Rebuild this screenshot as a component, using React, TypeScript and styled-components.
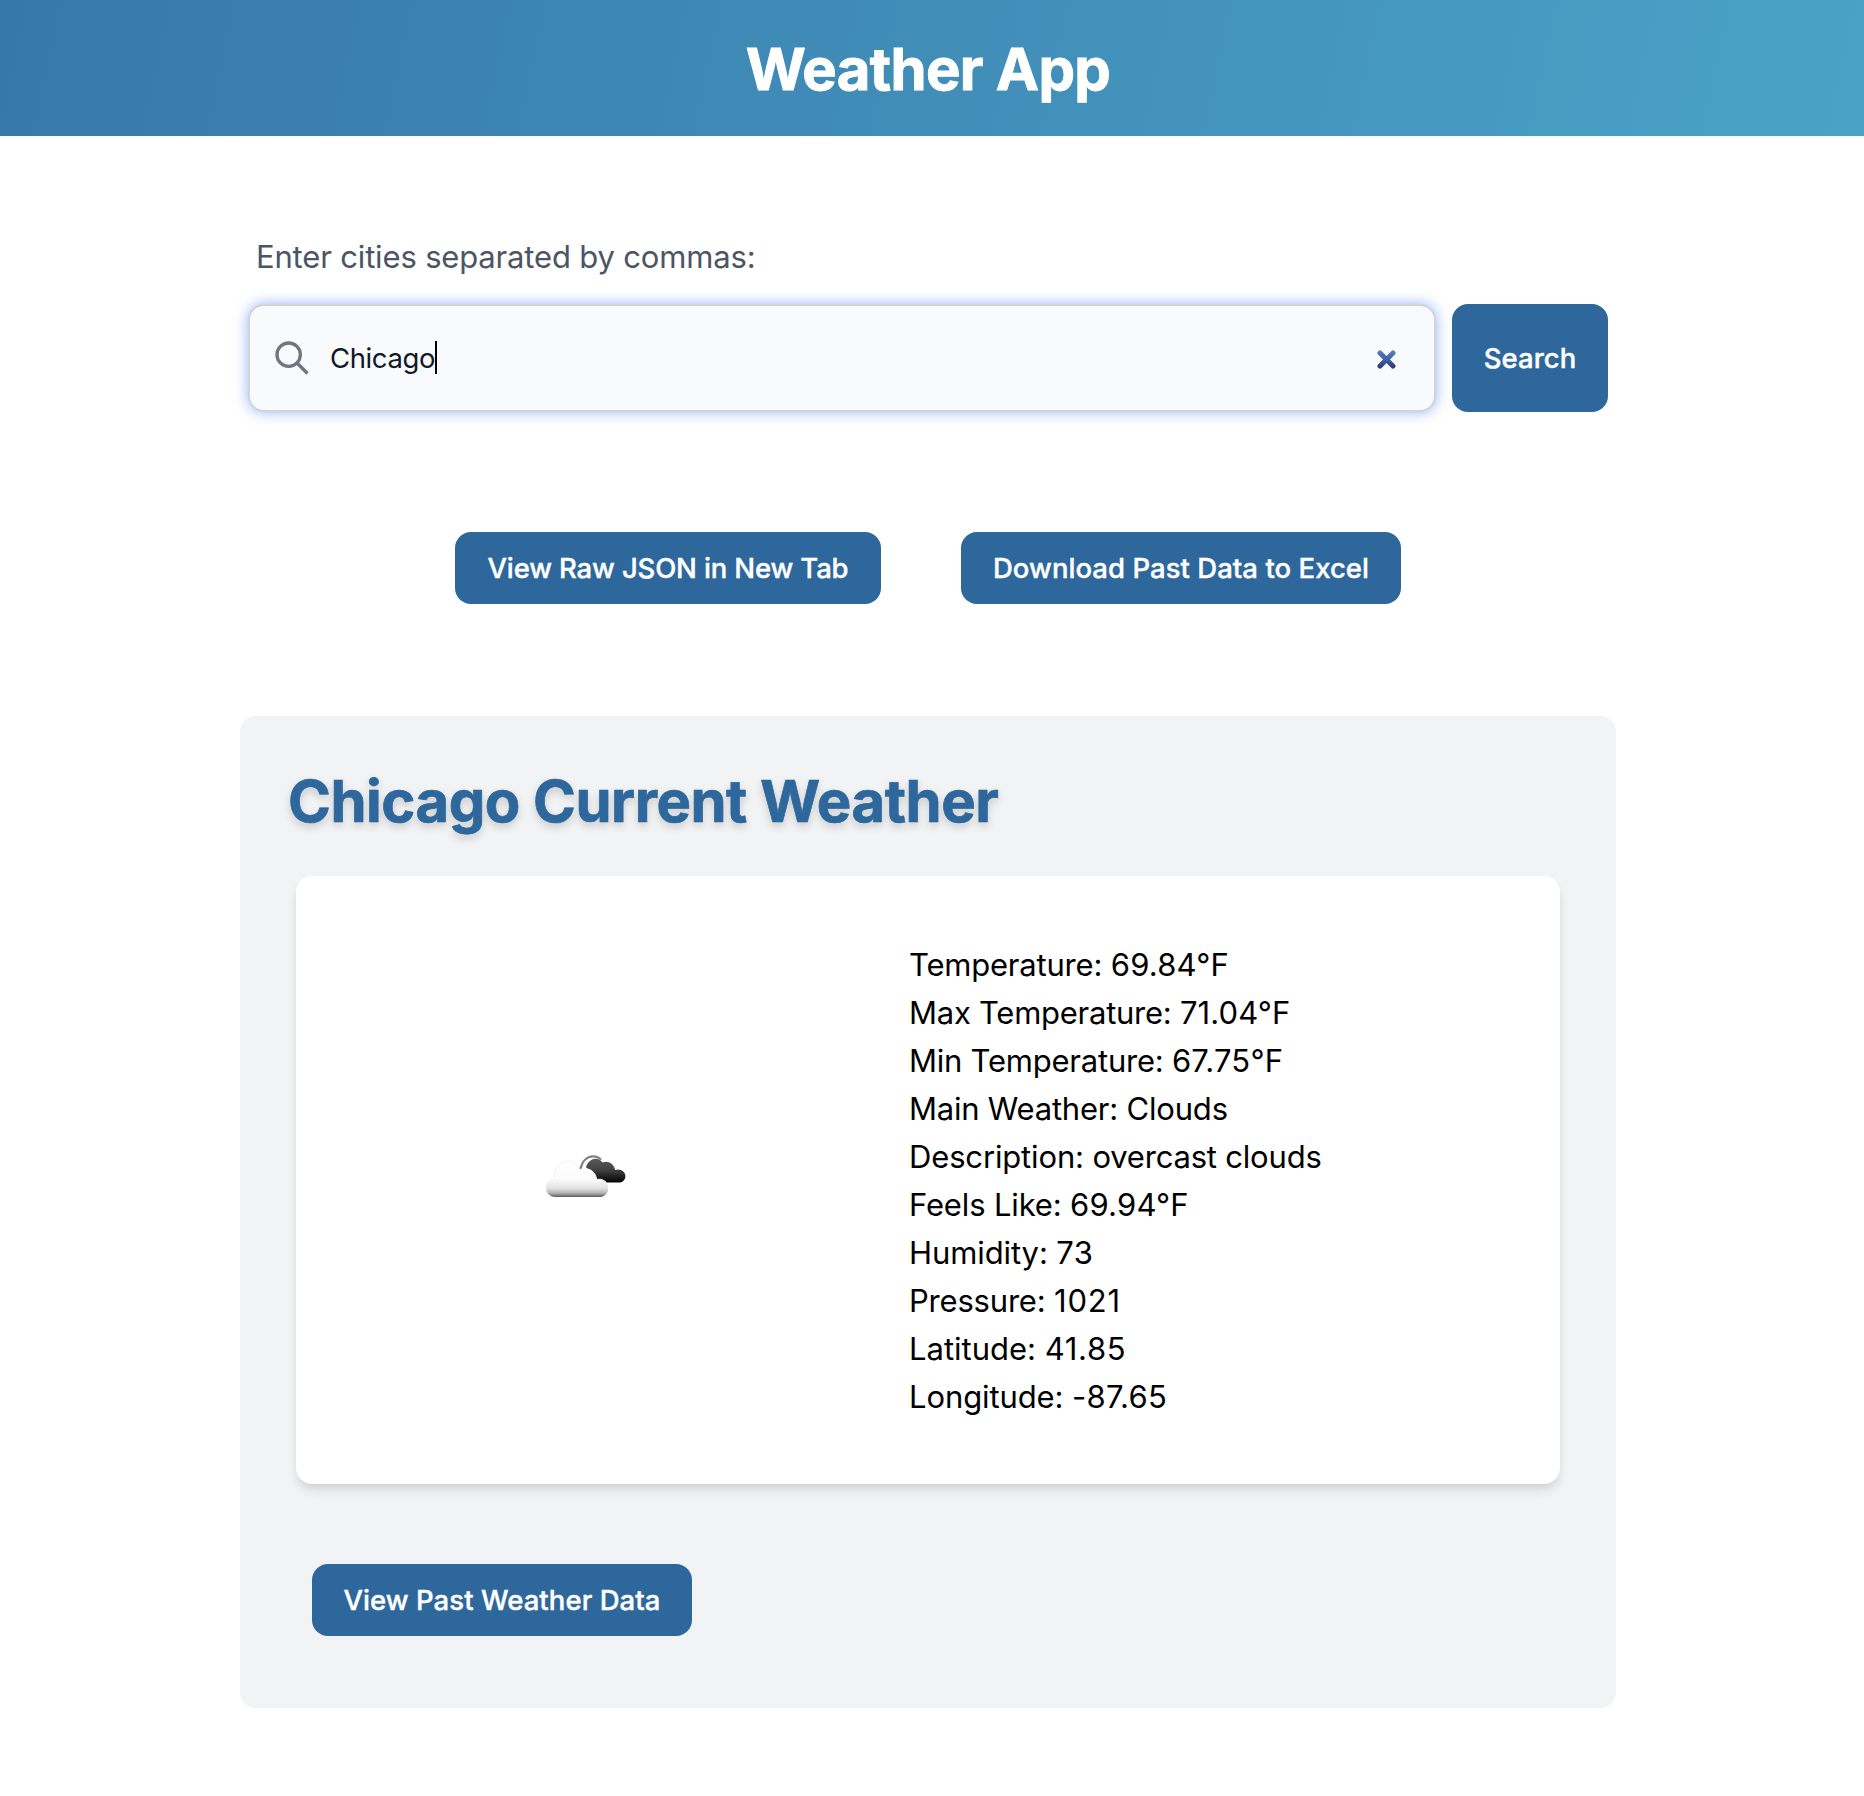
import React from 'react';
import styled, { createGlobalStyle } from 'styled-components';

const BLUE = '#2d679b';

const GlobalStyle = createGlobalStyle`
  *, *::before, *::after { box-sizing: border-box; }
  html, body { margin: 0; padding: 0; background: #ffffff; }
  body {
    font-family: Inter, "Liberation Sans", sans-serif;
    color: #000000;
    -webkit-font-smoothing: antialiased;
  }
  h1, h2, p, ul { margin: 0; padding: 0; }
`;

const Page = styled.div`
  min-height: 1796px;
  display: flex;
  flex-direction: column;
`;

const Header = styled.header`
  height: 136px;
  padding: 33px 8px 31px 0;
  background: linear-gradient(102deg, #3778aa 0%, #4aa3c7 100%);
  text-align: center;
`;

const Title = styled.h1`
  font-size: 58px;
  line-height: 72px;
  font-weight: 700;
  letter-spacing: -0.674px;
  color: #ffffff;
  -webkit-text-stroke: 0.9px #ffffff;
`;

const Main = styled.main`
  display: flex;
  flex-direction: column;
  align-items: center;
  padding: 97px 8px 88px 0;
`;

const SearchForm = styled.form`
  width: 1360px;
  display: flex;
  flex-direction: column;
  gap: 23px;
`;

const Label = styled.label`
  padding-left: 8px;
  font-size: 31px;
  line-height: 48px;
  letter-spacing: -0.165px;
  color: #4d5564;
`;

const SearchRow = styled.div`
  display: flex;
  gap: 16px;
  height: 108px;
`;

const Field = styled.div`
  flex: 1;
  display: flex;
  align-items: center;
  padding: 0 38px 0 22px;
  border: 2px solid #d2d4d8;
  border-radius: 16px;
  background: #f9fafc;
  box-shadow: 0 0 14px rgba(80, 130, 245, 0.6);
`;

const FieldText = styled.span`
  margin-left: 18px;
  font-size: 27.5px;
  line-height: 40px;
  letter-spacing: -0.4px;
  color: #111827;
`;

const Caret = styled.span`
  width: 2px;
  height: 33px;
  margin: 0 auto 1px 0;
  background: #000000;
`;

const ClearButton = styled.span`
  display: flex;
  margin-top: 3px;
`;

const Button = styled.button<{ $width: number; $tracking: number }>`
  width: ${(p) => p.$width}px;
  padding: 16px 0;
  border: 0;
  border-radius: 16px;
  background: ${BLUE};
  color: #ffffff;
  font-family: inherit;
  font-size: 27.5px;
  font-weight: 500;
  line-height: 40px;
  letter-spacing: ${(p) => p.$tracking}px;
  text-align: center;
  white-space: nowrap;
  -webkit-text-stroke: 0.4px #ffffff;
`;

const Actions = styled.div`
  display: flex;
  justify-content: center;
  gap: 80px;
  margin: 120px 0 112px;
`;

const Panel = styled.section`
  width: 1376px;
  height: 992px;
  padding: 49px 48px 72px;
  border-radius: 16px;
  background: #f2f3f5;
`;

const Heading = styled.h2`
  font-size: 58px;
  line-height: 72px;
  font-weight: 700;
  letter-spacing: -0.494px;
  color: ${BLUE};
  -webkit-text-stroke: 0.7px ${BLUE};
  text-shadow: 0 4px 8px rgba(0, 0, 0, 0.18);
`;

const Card = styled.article`
  display: grid;
  grid-template-columns: 452px 1fr;
  column-gap: 97px;
  margin: 39px 8px 80px;
  height: 608px;
  padding: 65px 64px 63px;
  border-radius: 16px;
  background: #ffffff;
  box-shadow: 0 8px 12px -2px rgba(0, 0, 0, 0.1), 0 4px 8px -2px rgba(0, 0, 0, 0.06);
`;

const IconCell = styled.div`
  display: flex;
  align-items: center;
  justify-content: center;
`;

const CloudArt = styled.svg`
  display: block;
  margin-top: -2px;
  filter: blur(0.7px);
`;

const Details = styled.ul`
  list-style: none;
`;

const Detail = styled.li`
  font-size: 31px;
  line-height: 48px;
  white-space: pre;
`;

const Tracked = styled.span<{ $tracking: number }>`
  letter-spacing: ${(p) => p.$tracking}px;
`;

const PanelFooter = styled.div`
  padding-left: 24px;
`;

const SearchIcon = () => (
  <svg width="40" height="40" viewBox="0 0 24 24" fill="none" stroke="#6e7583" strokeWidth="2">
    <path d="M21.300 21.300l-6.300-6.300m2-5a7 7 0 11-14 0 7 7 0 0114 0z" />
  </svg>
);

const ClearIcon = () => (
  <svg width="19" height="19" viewBox="0 0 19 19">
    <defs>
      <linearGradient id="clear" gradientUnits="userSpaceOnUse" x1="0" y1="0" x2="0" y2="19">
        <stop offset="0" stopColor="#5580cc" />
        <stop offset="0.55" stopColor="#3f5da0" />
        <stop offset="1" stopColor="#25356b" />
      </linearGradient>
    </defs>
    <path d="M3 3L16 16M16 3L3 16" stroke="url(#clear)" strokeWidth="5" strokeLinecap="round" />
  </svg>
);

const OvercastIcon = () => (
  <CloudArt width="100" height="100" viewBox="0 0 100 100">
    <defs>
      <linearGradient id="front" gradientUnits="userSpaceOnUse" x1="0" y1="30" x2="0" y2="67">
        <stop offset="0" stopColor="#ffffff" />
        <stop offset="0.5" stopColor="#fcfcfc" />
        <stop offset="0.76" stopColor="#e2e2e2" />
        <stop offset="0.89" stopColor="#b4b4b4" />
        <stop offset="1" stopColor="#5c5c5c" />
      </linearGradient>
      <linearGradient id="back" gradientUnits="userSpaceOnUse" x1="0" y1="28" x2="0" y2="52.5">
        <stop offset="0" stopColor="#5c5c5c" />
        <stop offset="0.5" stopColor="#404040" />
        <stop offset="1" stopColor="#030303" />
      </linearGradient>
    </defs>
    <path
      d="M50 37C52 30.500 57 28.400 60.500 28.800C63 29.200 65.300 30.600 66.500 32.600C71 30.200 77.500 32.600 79.200 40C84.500 38.100 89.400 41.600 89.400 46.200C89.400 49.800 86.600 52.600 83 52.600H62Z"
      fill="url(#back)"
    />
    <path d="M44.300 39.500C46 31 51 26.400 57 26.300C60.500 26.300 63 27.300 65 29.800" fill="none" stroke="#808080" strokeWidth="2.200" />
    <path
      d="M19.500 67C13.500 67 10 62.800 10 57.300C10 52.500 13.300 48.800 18 47.500C18.500 38.500 24 31 31.700 31C37.500 31 41.500 34.500 43.500 40C50.500 36.500 59.500 40 60.700 49.500C66.800 48.200 72.200 52 72.200 58.200C72.200 63.300 68.500 67 63.500 67Z"
      fill="url(#front)"
      stroke="#ffffff"
      strokeWidth="1"
      paintOrder="stroke"
    />
    <path d="M18 47.500C18.500 38.500 24 31 31.700 31C37.500 31 41.500 34.500 43.500 40" fill="none" stroke="#ededed" strokeWidth="0.900" />
  </CloudArt>
);

const details = [
  { label: 'Temperature', value: '69.84°F', labelTracking: -0.2, valueTracking: 0.2 },
  { label: 'Max Temperature', value: '71.04°F', labelTracking: -0.26, valueTracking: 0.12 },
  { label: 'Min Temperature', value: '67.75°F', labelTracking: -0.23, valueTracking: 0.2 },
  { label: 'Main Weather', value: 'Clouds', labelTracking: -0.22, valueTracking: -0.18 },
  { label: 'Description', value: 'overcast clouds', labelTracking: -0.15, valueTracking: -0.2 },
  { label: 'Feels Like', value: '69.94°F', labelTracking: -0.15, valueTracking: 0.18 },
  { label: 'Humidity', value: '73', labelTracking: -0.1, valueTracking: 0.4 },
  { label: 'Pressure', value: '1021', labelTracking: -0.2, valueTracking: 0.8 },
  { label: 'Latitude', value: '41.85', labelTracking: 0, valueTracking: 0.65 },
  { label: 'Longitude', value: '-87.65', labelTracking: -0.1, valueTracking: 0.3 },
];

export default function App() {
  return (
    <Page>
      <GlobalStyle />
      <Header>
        <Title>Weather App</Title>
      </Header>
      <Main>
        <SearchForm>
          <Label>Enter cities separated by commas:</Label>
          <SearchRow>
            <Field>
              <SearchIcon />
              <FieldText>Chicago</FieldText>
              <Caret />
              <ClearButton>
                <ClearIcon />
              </ClearButton>
            </Field>
            <Button type="button" $width={156} $tracking={0.05}>Search</Button>
          </SearchRow>
        </SearchForm>
        <Actions>
          <Button type="button" $width={426} $tracking={-0.147}>View Raw JSON in New Tab</Button>
          <Button type="button" $width={440} $tracking={0.04}>Download Past Data to Excel</Button>
        </Actions>
        <Panel>
          <Heading>Chicago Current Weather</Heading>
          <Card>
            <IconCell>
              <OvercastIcon />
            </IconCell>
            <Details>
              {details.map((d) => (
                <Detail key={d.label}>
                  <Tracked $tracking={d.labelTracking}>{`${d.label}: `}</Tracked>
                  <Tracked $tracking={d.valueTracking}>{d.value}</Tracked>
                </Detail>
              ))}
            </Details>
          </Card>
          <PanelFooter>
            <Button type="button" $width={380} $tracking={0.06}>View Past Weather Data</Button>
          </PanelFooter>
        </Panel>
      </Main>
    </Page>
  );
}
